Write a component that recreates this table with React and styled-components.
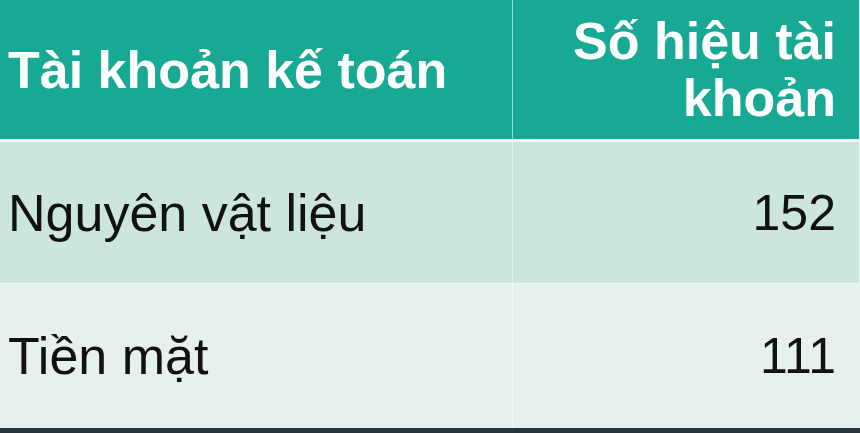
import React from 'react';
import styled, { createGlobalStyle } from 'styled-components';

const GlobalStyle = createGlobalStyle`
    html, body {
        margin: 0;
        padding: 0;
        background: #25343f;
    }
    body {
        font-family: 'Liberation Sans', Arial, sans-serif;
    }
`;

const accounts = [
    { name: 'Nguyên vật liệu', code: '152', tone: 'dark', height: 141 },
    { name: 'Tiền mặt', code: '111', tone: 'light', height: 144 },
];

const App = () => {
    return (
        <>
            <GlobalStyle />
            <Page>
                <Table>
                    <HeadRow>
                        <HeadCell>
                            <HeadText>Tài khoản kế toán</HeadText>
                        </HeadCell>
                        <HeadCell $right>
                            <HeadText>
                                Số hiệu tài
                                <br />
                                khoản
                            </HeadText>
                        </HeadCell>
                    </HeadRow>
                    {accounts.map(item => (
                        <BodyRow key={item.code} $tone={item.tone} $height={item.height}>
                            <Cell>{item.name}</Cell>
                            <Cell $right $number>{item.code}</Cell>
                        </BodyRow>
                    ))}
                </Table>
            </Page>
        </>
    );
};

export default App;

const Page = styled.div`
    width: 860px;
    height: 433px;
    background: #25343f;
    overflow: hidden;
`;

const Table = styled.div`
    width: 859px;
    display: flex;
    flex-direction: column;
    border-right: 1px solid #e2f2ee;
`;

const Row = styled.div`
    display: grid;
    grid-template-columns: 512px 1fr;
    box-sizing: border-box;
`;

const HeadRow = styled(Row)`
    height: 142px;
    background: #17a994;
    border-bottom: 3px solid #f4fbf9;
`;

const BodyRow = styled(Row)`
    height: ${p => p.$height + 1}px;
    background: ${p => (p.$tone === 'dark' ? '#cce6df' : '#e6f1ef')};
    border-bottom: 1px solid #f0f8f6;

    &:last-child {
        height: ${p => p.$height}px;
        border-bottom: none;
    }
`;

const BaseCell = styled.div`
    display: flex;
    flex-direction: column;
    justify-content: center;
    align-items: ${p => (p.$right ? 'flex-end' : 'flex-start')};
    padding: 0 23px 0 8px;
    font-size: 52px;
    text-align: ${p => (p.$right ? 'right' : 'left')};
    border-left: ${p => (p.$right ? '1px solid rgba(255, 255, 255, 0.55)' : 'none')};
    white-space: nowrap;
`;

const HeadCell = styled(BaseCell)`
    color: #ffffff;
    font-weight: 700;
`;

const HeadText = styled.span`
    display: block;
    line-height: 57px;
    padding-top: 1px;
`;

const Cell = styled(BaseCell)`
    color: #111111;
    font-weight: 400;
    line-height: 60px;
    font-size: ${p => (p.$number ? '50px' : '52px')};
`;
